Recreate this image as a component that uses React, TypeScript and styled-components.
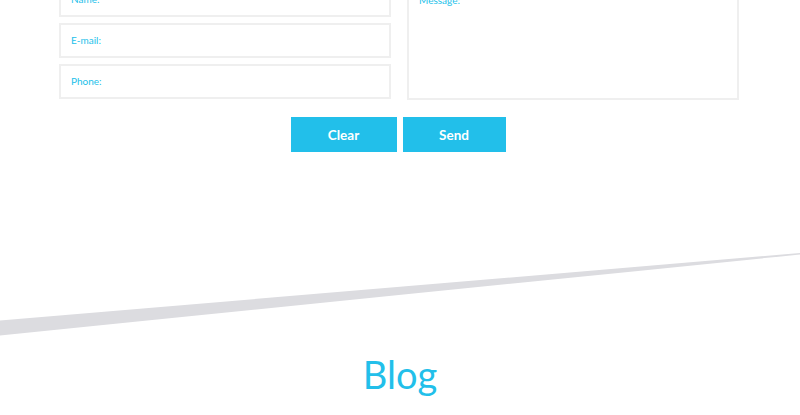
import styled, { createGlobalStyle } from "styled-components";

const GlobalStyle = createGlobalStyle`
  html, body {
    margin: 0;
    padding: 0;
    background: #ffffff;
    font-family: Lato, "Open Sans", sans-serif;
    overflow: hidden;
  }
`;

const Page = styled.div`
  width: 800px;
  height: 415px;
  overflow: hidden;
`;

const ContactForm = styled.form`
  width: 680px;
  margin: -18px 0 0 59px;
`;

const FieldsGrid = styled.div`
  display: grid;
  grid-template-columns: 332px 332px;
  column-gap: 16px;
`;

const FieldColumn = styled.div`
  display: flex;
  flex-direction: column;
  gap: 6px;
`;

const fieldStyle = `
  box-sizing: border-box;
  width: 100%;
  border: 2px solid #efefef;
  background: #ffffff;
  color: #22bfea;
  font-family: Lato, sans-serif;
  font-size: 10px;
  outline: none;
  &::placeholder {
    color: #22bfea;
    opacity: 1;
  }
`;

const Input = styled.input`
  ${fieldStyle}
  height: 35px;
  padding: 0 10px 2px;
`;

const TextArea = styled.textarea`
  ${fieldStyle}
  height: 118px;
  padding: 10px 10px;
  resize: none;
  display: block;
`;

const ButtonRow = styled.div`
  display: flex;
  justify-content: center;
  gap: 6px;
  margin-top: 17px;
  padding-right: 2px;
`;

const Button = styled.button<{ $w: number }>`
  width: ${(p) => p.$w}px;
  height: 35px;
  border: none;
  background: #22bfea;
  color: #ffffff;
  font-family: Lato, sans-serif;
  font-weight: 700;
  font-size: 13.5px;
  cursor: pointer;
`;

const Divider = styled.svg`
  display: block;
  width: 800px;
  height: 100px;
  margin-top: 88px;
`;

const BlogTitle = styled.h2`
  margin: 12px 0 0;
  text-align: center;
  font-family: Lato, sans-serif;
  font-weight: 400;
  font-size: 38px;
  line-height: 1.2;
  color: #22bfea;
`;

export default function App() {
  return (
    <Page>
      <GlobalStyle />
      <ContactForm onSubmit={(e) => e.preventDefault()}>
        <FieldsGrid>
          <FieldColumn>
            <Input placeholder="Name:" />
            <Input placeholder="E-mail:" />
            <Input placeholder="Phone:" />
          </FieldColumn>
          <TextArea placeholder="Message:" />
        </FieldsGrid>
        <ButtonRow>
          <Button type="reset" $w={106}>
            Clear
          </Button>
          <Button type="submit" $w={103}>
            Send
          </Button>
        </ButtonRow>
      </ContactForm>
      <Divider viewBox="0 0 800 100" preserveAspectRatio="none">
        <path d="M0 80.5 L800 13 L800 14.5 Q400 55 0 95.5 Z" fill="#dcdce0" />
      </Divider>
      <BlogTitle>Blog</BlogTitle>
    </Page>
  );
}
